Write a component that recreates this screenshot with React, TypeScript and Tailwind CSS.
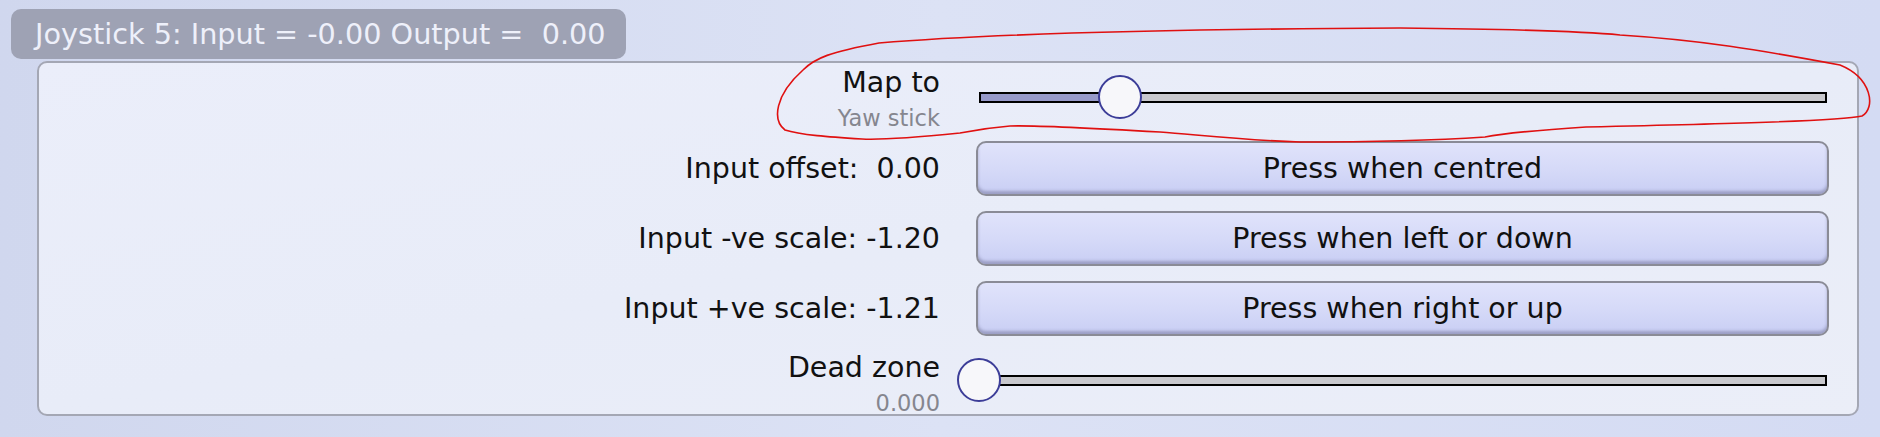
import React from 'react';

const font = "font-['DejaVu_Sans','Liberation_Sans',sans-serif]";

interface SliderProps {
  value: number; // 0..1
}

function Slider({ value }: SliderProps) {
  return (
    <div className="relative w-[848px] h-[44px] flex items-center">
      <div className="w-full h-[11px] border-2 border-black bg-[#c8c8cd]">
        <div className="h-full bg-[#979aca]" style={{ width: `${value * 100}%` }} />
      </div>
      {/* knob */}
      <div
        className="absolute top-0 w-[44px] h-[44px] -ml-[22px] rounded-full border-[2.5px] border-[#3c3d98] bg-[#f7f7fa]"
        style={{ left: `${value * 100}%` }}
      />
    </div>
  );
}

function PressButton({ label }: { label: string }) {
  return (
    <button className="w-[853px] h-[55px] rounded-[10px] border-2 border-[#8a8b96] bg-gradient-to-b from-[#e0e3fb] via-[#d6daf8] to-[#c9cef4] shadow-[inset_0_-3px_3px_rgba(70,70,110,0.35)] text-[28.5px] leading-[33px] text-[#111]">
      {label}
    </button>
  );
}

function ButtonRow({ label, button }: { label: string; button: string }) {
  return (
    <div className="flex items-center h-[55px]">
      <div className="w-[901px] text-right whitespace-pre text-[28.5px] leading-[33px] text-[#111]">{label}</div>
      <div className="ml-[36px]">
        <PressButton label={button} />
      </div>
    </div>
  );
}

export default function App() {
  return (
    <div
      className={`${font} relative w-[1880px] h-[437px] overflow-hidden bg-gradient-to-r from-[#d0d7ee] via-[#dce2f5] to-[#d4dbf3]`}
    >
      {/* Title tab */}
      <div className="ml-[11px] mt-[9px] w-[615px] h-[50px] rounded-[10px] bg-[#9ea2b4] pl-[24px] flex items-center">
        <span className="whitespace-pre text-[28.7px] leading-[33px] text-[#eef0fa]">
          Joystick 5: Input = -0.00 Output =  0.00
        </span>
      </div>

      {/* Panel */}
      <div className="ml-[37px] mt-[2px] w-[1822px] rounded-[10px] border-2 border-[#a4a7b4] bg-gradient-to-br from-[#ebeefa] via-[#e8ecf8] to-[#ebeef8] pb-px">
        {/* Map to */}
        <div className="flex items-start h-[70px]">
          <div className="w-[901px] pt-[3px] flex flex-col items-end">
            <span className="text-[28.5px] leading-[33px] text-[#111]">Map to</span>
            <span className="mt-[6px] text-[22.5px] leading-[26px] text-[#85868f]">Yaw stick</span>
          </div>
          <div className="ml-[39px] mt-[12px]">
            <Slider value={1 / 6} />
          </div>
        </div>

        <div className="mt-[8px] flex flex-col gap-[15px]">
          <ButtonRow label="Input offset:  0.00" button="Press when centred" />
          <ButtonRow label="Input -ve scale: -1.20" button="Press when left or down" />
          <ButtonRow label="Input +ve scale: -1.21" button="Press when right or up" />
        </div>

        {/* Dead zone */}
        <div className="mt-[7px] flex items-start h-[70px]">
          <div className="w-[901px] pt-[8px] flex flex-col items-end">
            <span className="text-[28.5px] leading-[33px] text-[#111]">Dead zone</span>
            <span className="mt-[6px] text-[22.5px] leading-[26px] text-[#85868f]">0.000</span>
          </div>
          <div className="ml-[39px] mt-[15px]">
            <Slider value={0} />
          </div>
        </div>
      </div>

      {/* red hand-drawn annotation */}
      <svg className="absolute inset-0 pointer-events-none" width="1880" height="437" viewBox="0 0 1880 437">
        <path
          d="M 785 130 C 772 120 775 95 803 70 C 815 58 830 52 879 43 C 1000 33 1200 29 1400 28 C 1500 29 1580 31 1620 35 C 1700 40 1760 50 1840 65 C 1872 78 1876 108 1862 116 C 1840 121 1720 124 1586 127 C 1540 130 1500 134 1485 137 C 1440 140 1380 142 1300 142 C 1240 140 1200 135 1160 132 C 1090 128 1030 125 1010 126 C 985 128 970 131 960 133 C 920 137 880 140 862 139 C 830 137 800 135 785 130 Z"
          fill="none"
          stroke="#e01010"
          strokeWidth="1.6"
        />
      </svg>
    </div>
  );
}
